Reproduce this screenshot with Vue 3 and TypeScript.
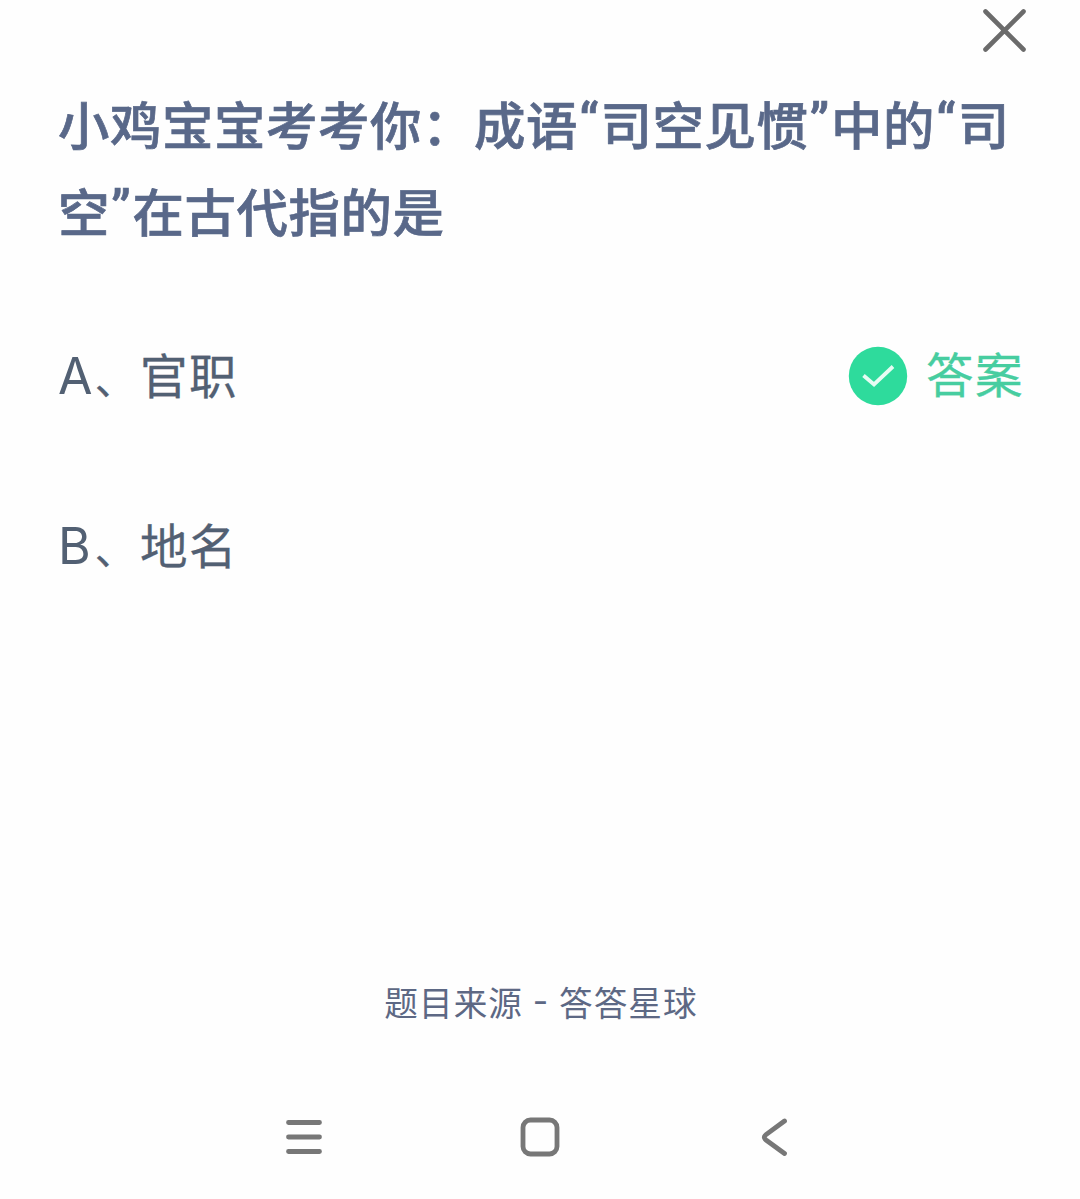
<script setup lang="ts">
interface Option {
  letter: string
  text: string
  correct: boolean
}

const titleLines: string[][] = [
  ['小鸡宝宝考考你：成语', '“', '司空见惯', '”', '中的', '“', '司'],
  ['空', '”', '在古代指的是'],
]

const options: Option[] = [
  { letter: 'A', text: '官职', correct: true },
  { letter: 'B', text: '地名', correct: false },
]

const isQuote = (part: string): boolean => part === '“' || part === '”'
</script>

<template>
  <main class="screen">
    <header class="top">
      <svg class="close" width="48" height="48" viewBox="0 0 48 48" aria-label="关闭">
        <path d="M4.5 4.5 L42.5 42.5 M42.5 4.5 L4.5 42.5" fill="none" stroke="#6b6b6b" stroke-width="4.6" stroke-linecap="round" />
      </svg>
    </header>

    <h1 class="title">
      <span v-for="(line, i) in titleLines" :key="i" class="line">
        <span v-for="(part, j) in line" :key="j" :class="{ quote: isQuote(part) }">{{ part }}</span>
      </span>
    </h1>

    <ul class="options">
      <li v-for="o in options" :key="o.letter" class="option">
        <span class="choice">
          <span class="letter">{{ o.letter }}</span>
          <span class="comma">、</span>
          <span class="label">{{ o.text }}</span>
        </span>
        <span v-if="o.correct" class="answer">
          <svg width="60" height="60" viewBox="0 0 60 60">
            <circle cx="30" cy="30" r="29.2" fill="#2edb9c" />
            <path d="M15.5 29.5 L26 38.5 L45 20.5" fill="none" stroke="#e6fcf3" stroke-width="3.8" />
          </svg>
          <span class="label answer-text">答案</span>
        </span>
      </li>
    </ul>

    <p class="source">题目来源<span class="dash">-</span>答答星球</p>

    <nav class="navbar">
      <svg width="40" height="40" viewBox="0 0 40 40">
        <path d="M4.5 5.5 H35.5 M4.5 20 H35.5 M4.5 34.5 H35.5" stroke="#777" stroke-width="4.8" stroke-linecap="round" />
      </svg>
      <svg width="40" height="40" viewBox="0 0 40 40">
        <rect x="3" y="3" width="34" height="34" rx="7.5" fill="none" stroke="#777" stroke-width="4.8" />
      </svg>
      <svg width="40" height="40" viewBox="0 0 40 40">
        <path d="M29.5 4 L11 17.6 Q7.5 20.3 11 23 L29.5 36.5" fill="none" stroke="#777" stroke-width="4.8" stroke-linecap="round" />
      </svg>
    </nav>
  </main>
</template>

<style>
body {
  margin: 0;
  background: #fefefe;
}
</style>

<style scoped>
.screen {
  box-sizing: border-box;
  width: 1080px;
  height: 1199px;
  display: flex;
  flex-direction: column;
  background: #fefefe;
  font-family: "Noto Sans CJK SC", sans-serif;
  overflow: hidden;
}
.top {
  display: flex;
  justify-content: flex-end;
  height: 79px;
  padding: 7px 51px 0 0;
  box-sizing: border-box;
}
.close {
  display: block;
}
.title {
  margin: 0;
  padding-left: 58px;
  font-size: 51.4px;
  letter-spacing: 0.6px;
  font-weight: 500;
  line-height: 87px;
  color: #596889;
  -webkit-text-stroke: 0.7px #596889;
}
.line {
  display: flex;
  height: 87px;
  white-space: nowrap;
}
.quote {
  width: 22.6px;
  text-align: center;
  font-family: Roboto, sans-serif;
  font-weight: 500;
}
.options {
  list-style: none;
  margin: 38px 0 0;
  padding: 0 56px 0 58px;
}
.option {
  display: flex;
  align-items: center;
  height: 170px;
  font-size: 47.5px;
  line-height: 70px;
  color: #526073;
}
.choice {
  display: flex;
  align-items: baseline;
  padding-bottom: 2px;
}
.letter {
  width: 37px;
  font-family: Inter, sans-serif;
  font-size: 50px;
}
.comma {
  width: 45px;
  font-size: 40px;
  -webkit-text-stroke: 0.4px currentColor;
}
.label {
  letter-spacing: 1.5px;
  -webkit-text-stroke: 0.3px currentColor;
}
.answer {
  display: flex;
  align-items: center;
  gap: 18px;
  margin-left: auto;
  color: #47cda0;
}
.answer-text {
  padding-bottom: 6px;
}
.source {
  margin: 346px 0 0;
  padding-left: 2px;
  text-align: center;
  font-size: 33.6px;
  line-height: 50px;
  letter-spacing: 1.1px;
  color: #5d6884;
}
.dash {
  display: inline-block;
  width: 36px;
  font-family: Inter, sans-serif;
  line-height: 30px;
  vertical-align: 3px;
}
.navbar {
  display: flex;
  justify-content: space-between;
  margin-top: auto;
  padding: 0 285px 42px 284px;
}
</style>
